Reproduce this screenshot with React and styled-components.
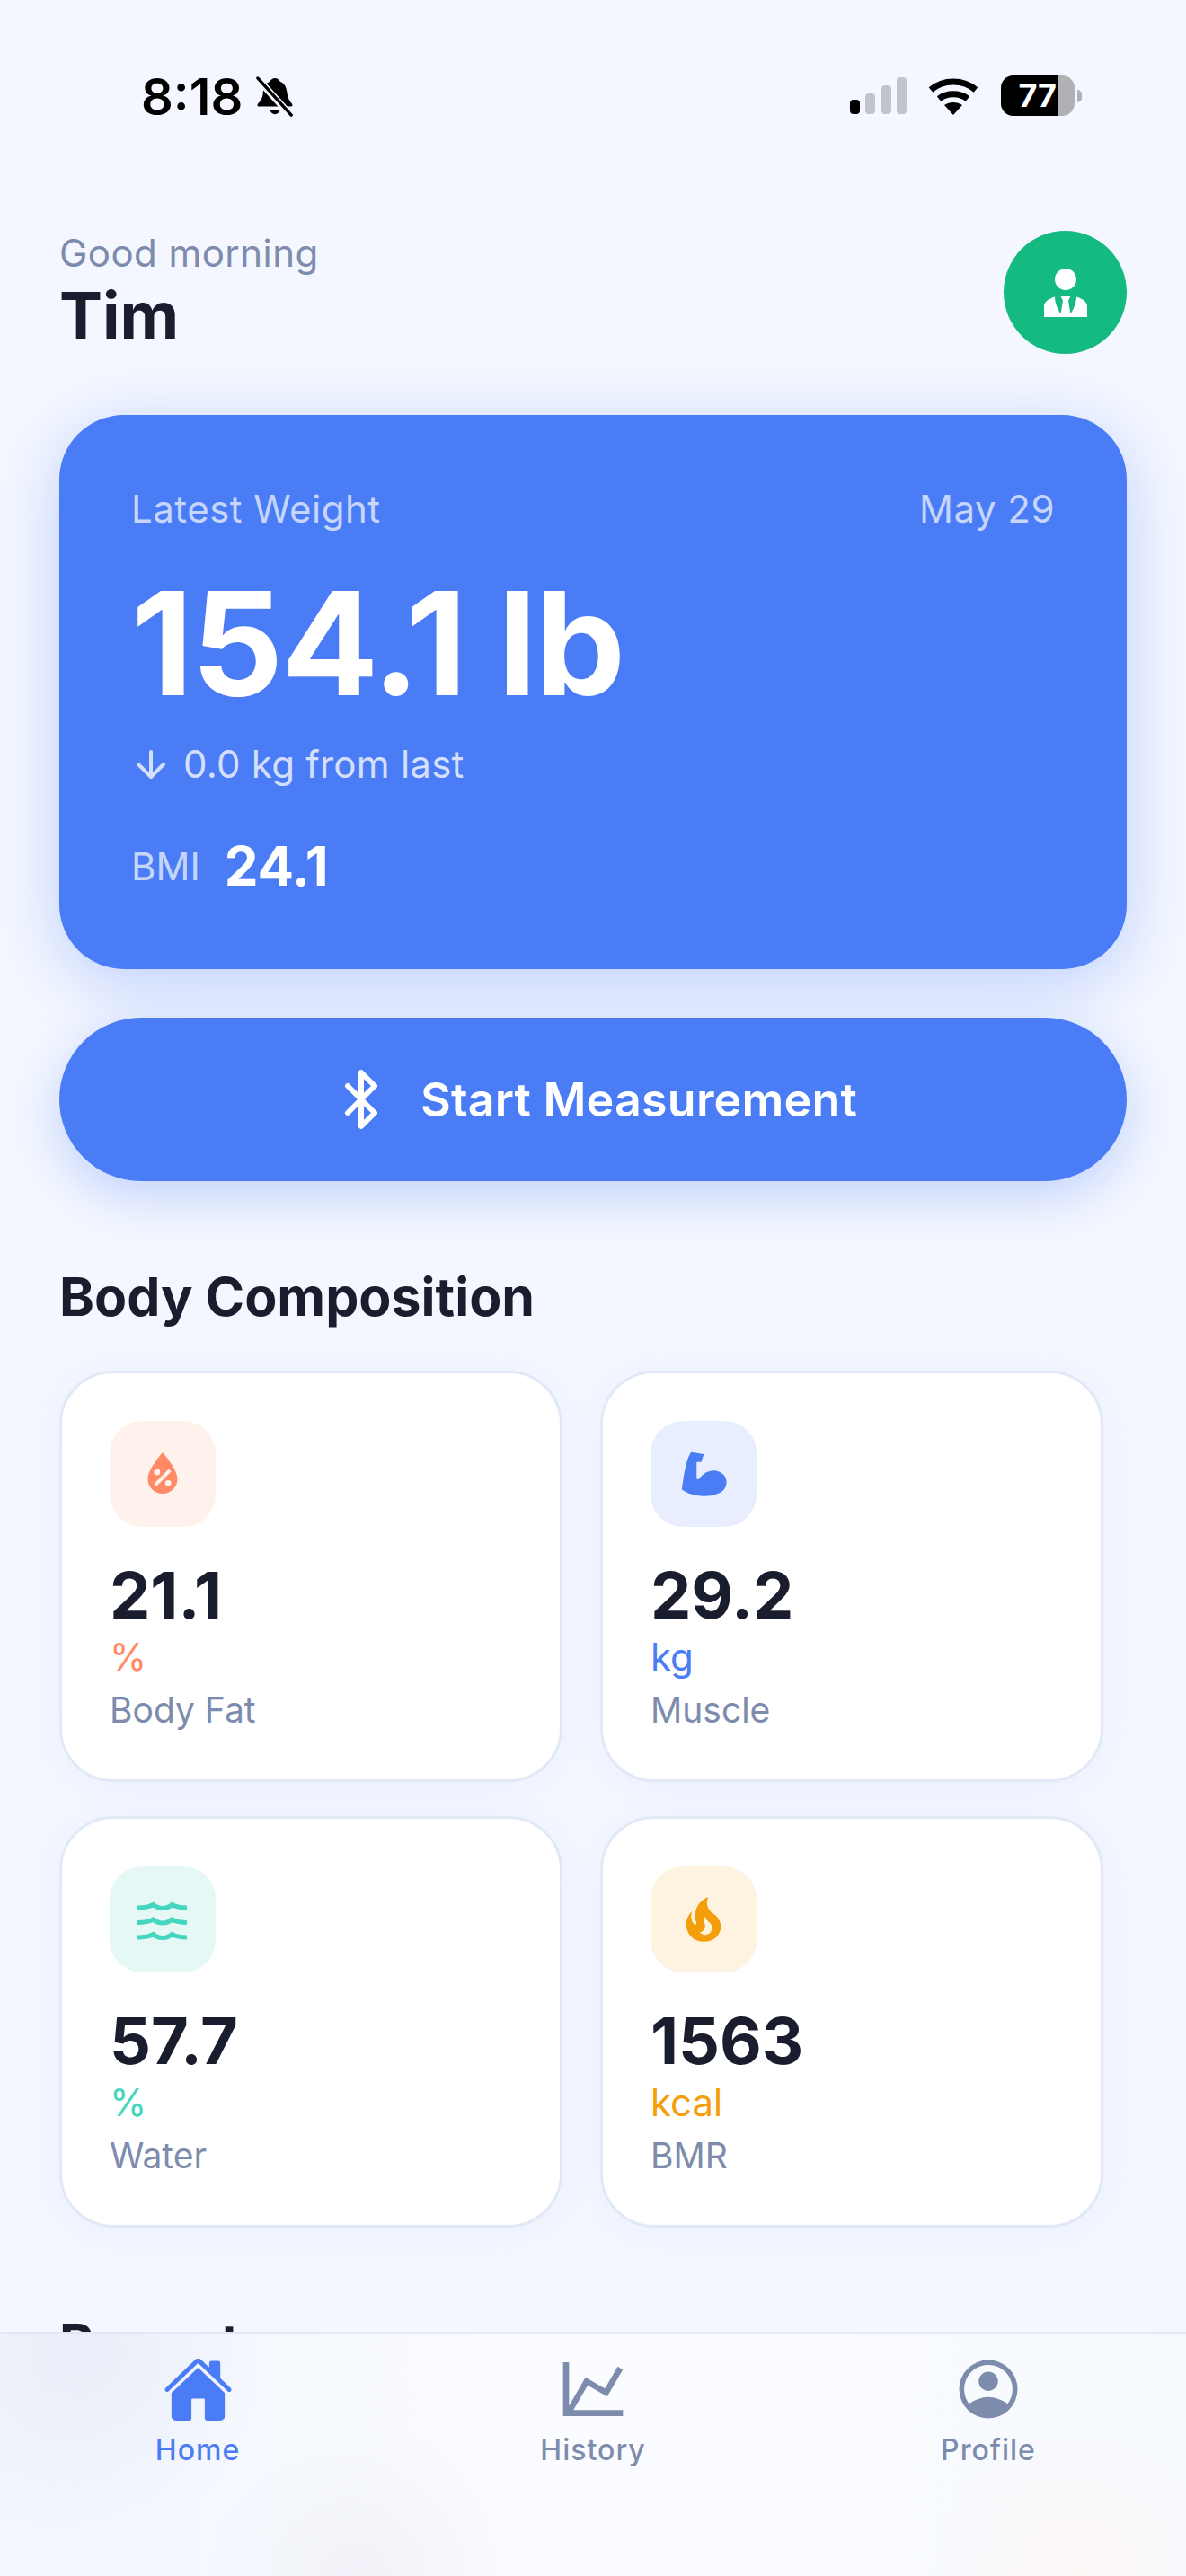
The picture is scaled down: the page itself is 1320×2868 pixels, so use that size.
import styled, { createGlobalStyle } from "styled-components";
import { IoHome } from "react-icons/io5";
import { LuArrowDown, LuBluetooth } from "react-icons/lu";

const GlobalStyle = createGlobalStyle`
  html, body {
    margin: 0;
    padding: 0;
    background: #f4f7ff;
  }
  * {
    box-sizing: border-box;
  }
`;

const Screen = styled.div`
  position: relative;
  width: 1320px;
  height: 2868px;
  overflow: hidden;
  background: #f4f7ff;
  font-family: Inter, "Liberation Sans", sans-serif;
  color: #1a1d2e;
`;

const StatusBar = styled.div`
  height: 204px;
  padding: 0 116px 0 157px;
  display: flex;
  justify-content: space-between;
  align-items: flex-start;
  color: #000;
`;

const StatusLeft = styled.div`
  display: flex;
  align-items: center;
  gap: 14px;
  padding-top: 74px;
`;

const Time = styled.div`
  font-size: 56px;
  line-height: 68px;
  font-weight: 600;
`;

const StatusRight = styled.div`
  display: flex;
  align-items: center;
  padding-top: 84px;
`;

const Battery = styled.div`
  width: 82px;
  height: 45px;
  margin-left: 25px;
  border-radius: 14px;
  overflow: hidden;
  display: flex;
  background: #b0b1b5;
`;

const BatteryLevel = styled.div`
  width: 64px;
  background: #000;
  color: #fff;
  font-size: 36px;
  line-height: 45px;
  font-weight: 700;
  text-align: right;
  padding-right: 2px;
`;

const BatteryTip = styled.div`
  width: 5px;
  height: 14px;
  margin-left: 3px;
  background: #b0b1b5;
  border-radius: 0 6px 6px 0;
`;

const Content = styled.div`
  padding: 53px 66px 0;
`;

const Header = styled.div`
  display: flex;
  justify-content: space-between;
  align-items: flex-start;
`;

const Greeting = styled.div`
  font-size: 42px;
  line-height: 50px;
  letter-spacing: 0.45px;
  color: #7d8cac;
`;

const UserName = styled.div`
  font-size: 72px;
  line-height: 88px;
  font-weight: 700;
`;

const Avatar = styled.div`
  width: 137px;
  height: 137px;
  border-radius: 50%;
  background: #14ba80;
  color: #fff;
  display: flex;
  align-items: center;
  justify-content: center;
`;

const WeightCard = styled.div`
  margin-top: 67px;
  height: 617px;
  border-radius: 72px;
  background: #4a7cf6;
  padding: 80px 80px 0;
  color: #fff;
  box-shadow: 0 16px 72px rgba(74, 124, 246, 0.32);
`;

const WeightTop = styled.div`
  display: flex;
  justify-content: space-between;
  font-size: 42px;
  line-height: 50px;
  letter-spacing: 0.5px;
  color: #c6d5fc;
`;

const WeightValue = styled.div`
  margin-top: 27px;
  font-size: 160px;
  line-height: 194px;
  font-weight: 700;
  letter-spacing: -2px;
`;

const Delta = styled.div`
  margin-top: 13px;
  margin-left: -2px;
  display: flex;
  align-items: center;
  gap: 12px;
  font-size: 42px;
  line-height: 50px;
  letter-spacing: 0.25px;
  color: #d3dffd;
`;

const BmiRow = styled.div`
  margin-top: 53px;
  display: flex;
  align-items: center;
  gap: 27px;
`;

const BmiLabel = styled.div`
  font-size: 42px;
  color: #c6d5fc;
`;

const BmiValue = styled.div`
  font-size: 60px;
  line-height: 70px;
  font-weight: 700;
`;

const MeasureButton = styled.div`
  margin-top: 54px;
  height: 182px;
  border-radius: 91px;
  background: #4a7cf6;
  color: #fff;
  display: flex;
  align-items: center;
  justify-content: center;
  gap: 30px;
  font-size: 52px;
  font-weight: 600;
  letter-spacing: 0.2px;
  box-shadow: 0 16px 56px rgba(74, 124, 246, 0.3);
`;

const SectionTitle = styled.div`
  margin-top: 94px;
  font-size: 59px;
  line-height: 70px;
  font-weight: 700;
`;

const MetricGrid = styled.div`
  margin-top: 47px;
  width: 1160px;
  display: grid;
  grid-template-columns: 560px 560px;
  grid-auto-rows: 458px;
  gap: 38px 42px;
`;

const MetricCard = styled.div`
  border-radius: 60px;
  background: #fff;
  border: 3px solid #e2e9f6;
  padding: 53px 53px 0;
  box-shadow: 0 4px 40px rgba(74, 124, 246, 0.06);
`;

const IconBox = styled.div`
  width: 118px;
  height: 118px;
  border-radius: 36px;
  background: ${(props) => props.$tint};
  color: ${(props) => props.$color};
  display: flex;
  align-items: center;
  justify-content: center;
`;

const MetricValue = styled.div`
  margin-top: 30px;
  font-size: 72px;
  line-height: 92px;
  font-weight: 700;
`;

const MetricUnit = styled.div`
  font-size: 42px;
  line-height: 46px;
  color: ${(props) => props.$color};
`;

const MetricName = styled.div`
  margin-top: 8px;
  font-size: 39px;
  line-height: 56px;
  color: #7d8cac;
`;

const BottomNav = styled.div`
  position: absolute;
  left: 0;
  right: 0;
  bottom: 0;
  height: 272px;
  border-top: 3px solid #e1e8f6;
  background:
    radial-gradient(circle at 90px 20px, rgba(230, 234, 245, 0.75), transparent 210px),
    radial-gradient(circle at 400px 270px, rgba(238, 239, 246, 0.7), transparent 170px),
    radial-gradient(circle at 1200px 270px, rgba(255, 247, 246, 0.9), transparent 170px),
    linear-gradient(90deg, #f2f6fe 0%, #fbfcff 50%, #f6f9fe 100%);
  display: grid;
  grid-template-columns: repeat(3, 1fr);
  padding-top: 21px;
`;

const NavItem = styled.div`
  display: flex;
  flex-direction: column;
  align-items: center;
  color: ${(props) => (props.$active ? "#4a7cf6" : "#7d8cac")};
`;

const NavIcon = styled.div`
  height: 80px;
  display: flex;
  align-items: center;
  justify-content: center;
`;

const NavLabel = styled.div`
  margin-top: 8px;
  font-size: 32px;
  line-height: 40px;
  font-weight: 500;
  letter-spacing: 1px;
`;

// drawn icons, paths follow the reference glyphs
const MdiIcon = ({ d, size = 66 }) => (
  <svg width={size} height={size} viewBox="0 0 24 24" fill="currentColor">
    <path d={d} />
  </svg>
);

const BellSlash = () => (
  <svg width="44" height="46" viewBox="0 0 46 46">
    <path
      d="M23 1c3 0 5 2 6 4 5 2 7 6 8 12 1 7 3 11 6 14 1 2 0 3-2 3H5c-2 0-3-1-2-3 3-3 5-6 6-11 0-7 3-13 8-15 1-2 3-4 6-4zM17 38h12c-1 3-3 5-6 5s-5-2-6-5z"
      fill="#000"
    />
    <path d="M4 3l37 41" stroke="#f4f7ff" strokeWidth="8" />
    <path d="M3 1l39 43" stroke="#000" strokeWidth="3.6" strokeLinecap="round" />
  </svg>
);

const SignalBars = () => (
  <svg width="63" height="41" viewBox="0 0 63 41">
    <rect x="0" y="25" width="11" height="16" rx="4" fill="#000" />
    <rect x="17" y="18" width="11" height="23" rx="4" fill="#c1c4cd" />
    <rect x="35" y="9" width="11" height="32" rx="4" fill="#c1c4cd" />
    <rect x="52" y="0" width="11" height="41" rx="4" fill="#c1c4cd" />
  </svg>
);

const WifiIcon = () => (
  <svg width="56" height="42" viewBox="0 0 56 42" style={{ marginLeft: 24 }}>
    <path d="M28 42L18 31c6-4 14-4 20 0z" fill="#000" />
    <path d="M3 14c14-12 36-12 50 0" fill="none" stroke="#000" strokeWidth="7" />
    <path d="M12 24c9-7 23-7 32 0" fill="none" stroke="#000" strokeWidth="7" />
  </svg>
);

const ArmIcon = () => (
  <svg width="66" height="66" viewBox="0 0 66 66" fill="currentColor">
    <path d="M19.2 8.7L33.3 11L30.6 19.7H25.3V38.7H28C32 33 38 29.3 44 29.3C52 29.3 58.6 35 58.6 42C58.6 49 54 53.6 47.9 55.3C42 57.5 37 58 32.5 57.7C24 57.5 15 55 8.8 50.3C11 36 13 18 19.2 8.7Z" />
  </svg>
);

const wave = "C12 20 18 19 22.5 16.5C26 19.5 30 20.500 33 20.500C36 20.500 40 19.500 43.500 16.500C48 19 54 20 60 20";

const WavesIcon = () => (
  <svg width="66" height="66" viewBox="0 0 66 66" fill="none" stroke="currentColor" strokeWidth="5">
    <path d={`M5 20${wave}`} />
    <path d={`M5 20${wave}`} transform="translate(0 16.5)" />
    <path d={`M5 20${wave}`} transform="translate(0 33)" />
  </svg>
);

const ChartIcon = () => (
  <MdiIcon
    size={80}
    d="M16,11.78L20.24,4.45L21.97,5.45L16.74,14.5L10.23,10.75L5.46,19H22V21H2V3H4V17.54L9.5,8L16,11.78Z"
  />
);

const ProfileIcon = () => (
  <svg width="78" height="78" viewBox="0 0 24 24" fill="currentColor">
    <path d="M12 2a10 10 0 1 0 0 20 10 10 0 0 0 0-20zm0 1.700a8.300 8.300 0 0 1 6.600 13.300C16.900 15.700 14 14.700 12 14.700s-4.900 1-6.600 2.300A8.300 8.300 0 0 1 12 3.700z" />
    <circle cx="12" cy="9.300" r="3.300" />
  </svg>
);

const icons = {
  drop: "M12,3.25C12,3.25 6,10 6,14C6,17.32 8.69,20 12,20A6,6 0 0,0 18,14C18,10 12,3.25 12,3.25M14.47,9.97L15.53,11.03L9.53,17.03L8.47,15.97M9.75,10A1.25,1.25 0 0,1 11,11.25A1.25,1.25 0 0,1 9.75,12.5A1.25,1.25 0 0,1 8.5,11.25A1.25,1.25 0 0,1 9.75,10M14.25,14.5A1.25,1.25 0 0,1 15.5,15.75A1.25,1.25 0 0,1 14.25,17A1.25,1.25 0 0,1 13,15.75A1.25,1.25 0 0,1 14.25,14.5Z",
  fire: "M17.66 11.2C17.43 10.9 17.15 10.64 16.89 10.38C16.22 9.78 15.46 9.35 14.82 8.72C13.33 7.26 13 4.85 13.95 3C13 3.23 12.17 3.75 11.46 4.32C8.87 6.4 7.85 10.07 9.07 13.22C9.11 13.32 9.15 13.42 9.15 13.55C9.15 13.77 9 13.97 8.8 14.05C8.57 14.15 8.33 14.09 8.14 13.93C8.08 13.88 8.04 13.83 8 13.76C6.87 12.33 6.69 10.28 7.45 8.64C5.78 10 4.87 12.3 5 14.47C5.06 14.97 5.12 15.47 5.29 15.97C5.43 16.57 5.7 17.17 6 17.7C7.08 19.43 8.95 20.67 10.96 20.92C13.1 21.19 15.39 20.8 17.03 19.32C18.86 17.66 19.5 15 18.56 12.72L18.43 12.46C18.22 12 17.66 11.2 17.66 11.2M14.5 17.5C14.22 17.74 13.76 18 13.4 18.1C12.28 18.5 11.16 17.94 10.5 17.28C11.69 17 12.4 16.12 12.61 15.23C12.78 14.43 12.46 13.77 12.33 13C12.21 12.26 12.23 11.63 12.5 10.94C12.69 11.32 12.89 11.7 13.13 12C13.9 13 15.11 13.44 15.37 14.8C15.41 14.94 15.43 15.08 15.43 15.23C15.46 16.05 15.1 16.95 14.5 17.5H14.5Z",
  tie: "M12 3C14.21 3 16 4.79 16 7S14.21 11 12 11 8 9.21 8 7 9.79 3 12 3M16 13.54C16 14.6 15.72 17.07 13.81 19.83L13 15L13.94 13.12C13.32 13.05 12.67 13 12 13S10.68 13.05 10.06 13.12L11 15L10.19 19.83C8.28 17.07 8 14.6 8 13.54C5.61 14.24 4 15.5 4 17V21H20V17C20 15.5 18.4 14.24 16 13.54Z",
};

const metrics = [
  { value: "21.1", unit: "%", name: "Body Fat", color: "#ff8a65", tint: "#fff1ec", icon: <MdiIcon d={icons.drop} /> },
  { value: "29.2", unit: "kg", name: "Muscle", color: "#4a7cf6", tint: "#e8eefd", icon: <ArmIcon /> },
  { value: "57.7", unit: "%", name: "Water", color: "#45d6c0", tint: "#e5f8f5", icon: <WavesIcon /> },
  { value: "1563", unit: "kcal", name: "BMR", color: "#f59e0b", tint: "#fef3e1", icon: <MdiIcon d={icons.fire} /> },
];

const App = () => {
  return (
    <Screen>
      <GlobalStyle />
      <StatusBar>
        <StatusLeft>
          <Time>8:18</Time>
          <BellSlash />
        </StatusLeft>
        <StatusRight>
          <SignalBars />
          <WifiIcon />
          <Battery>
            <BatteryLevel>77</BatteryLevel>
          </Battery>
          <BatteryTip />
        </StatusRight>
      </StatusBar>
      <Content>
        <Header>
          <div>
            <Greeting>Good morning</Greeting>
            <UserName>Tim</UserName>
          </div>
          <Avatar>
            <MdiIcon size={72} d={icons.tie} />
          </Avatar>
        </Header>
        <WeightCard>
          <WeightTop>
            <div>Latest Weight</div>
            <div>May 29</div>
          </WeightTop>
          <WeightValue>154.1 lb</WeightValue>
          <Delta>
            <LuArrowDown size={48} />
            0.0 kg from last
          </Delta>
          <BmiRow>
            <BmiLabel>BMI</BmiLabel>
            <BmiValue>24.1</BmiValue>
          </BmiRow>
        </WeightCard>
        <MeasureButton>
          <LuBluetooth size={72} />
          Start Measurement
        </MeasureButton>
        <SectionTitle>Body Composition</SectionTitle>
        <MetricGrid>
          {metrics.map((metric) => (
            <MetricCard key={metric.name}>
              <IconBox $tint={metric.tint} $color={metric.color}>
                {metric.icon}
              </IconBox>
              <MetricValue>{metric.value}</MetricValue>
              <MetricUnit $color={metric.color}>{metric.unit}</MetricUnit>
              <MetricName>{metric.name}</MetricName>
            </MetricCard>
          ))}
        </MetricGrid>
        <SectionTitle>Recent</SectionTitle>
      </Content>
      <BottomNav>
        <NavItem $active>
          <NavIcon>
            <IoHome size={79} />
          </NavIcon>
          <NavLabel>Home</NavLabel>
        </NavItem>
        <NavItem>
          <NavIcon>
            <ChartIcon />
          </NavIcon>
          <NavLabel>History</NavLabel>
        </NavItem>
        <NavItem>
          <NavIcon>
            <ProfileIcon />
          </NavIcon>
          <NavLabel>Profile</NavLabel>
        </NavItem>
      </BottomNav>
    </Screen>
  );
};

export default App;
